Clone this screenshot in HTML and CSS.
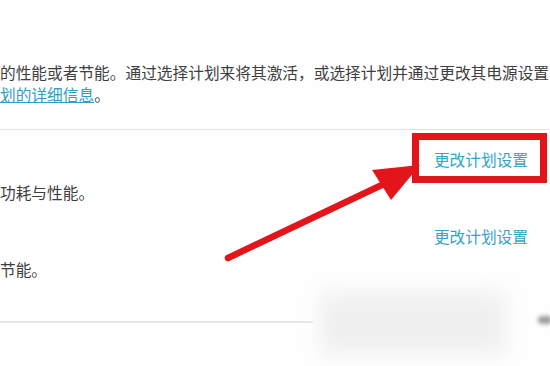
FILE: index.html
```html
<html>
<head>
<meta charset="utf-8">
<link rel="stylesheet" href="styles.css">
</head>
<body>
<div class="page">
  <div class="intro">
    <p class="line">的性能或者节能。通过选择计划来将其激活，或选择计划并通过更改其电源设置</p>
    <p class="line"><a href="#" class="detail">划的详细信息</a>。</p>
  </div>

  <div class="plans">
    <div class="plan">
      <div class="plan-head"><a href="#" class="change">更改计划设置</a></div>
      <p class="desc">功耗与性能。</p>
    </div>
    <div class="plan">
      <div class="plan-head"><a href="#" class="change">更改计划设置</a></div>
      <p class="desc">节能。</p>
    </div>
  </div>

  <!-- annotation drawn over the screenshot -->
  <div class="highlight"></div>
  <svg class="arrow" width="550" height="366" viewBox="0 0 550 366">
    <line x1="228" y1="258" x2="386" y2="183" stroke="#e3151b" stroke-width="6.5" stroke-linecap="round"/>
    <polygon points="420,165 372,170 391,200" fill="#e3151b"/>
  </svg>

  <div class="watermark"></div>
  <div class="blob"></div>
</div>
</body>
</html>
```

FILE: styles.css
```css
body {
  margin: 0;
  background: #fefefe;
  font-family: "Noto Sans CJK SC", "Noto Sans", sans-serif;
  color: #3e3e3e;
  overflow: hidden;
}

.page {
  position: relative;
  width: 550px;
  height: 366px;
  overflow: hidden;
}

p {
  margin: 0;
}

/* top explanation text */
.intro {
  padding-top: 62px;
  padding-bottom: 23px;
  border-bottom: 1px solid #e2e2e2;
}

.line {
  font-size: 15.7px;
  line-height: 22px;
  white-space: nowrap;
}

.detail {
  color: #2f9fc3;
  text-decoration: underline;
}

/* power plans */
.plans {
  padding-top: 19px;
  padding-bottom: 40px;
  border-bottom: 2px solid #e6e6e6;
  width: 313px;
}

.plan {
  width: 550px;
}

.plan + .plan {
  margin-top: 22px;
}

.plan-head {
  display: flex;
  justify-content: flex-end;
  padding-right: 22px;
  height: 22px;
  line-height: 22px;
  margin-bottom: 11px;
}

.change {
  color: #34a3c5;
  text-decoration: none;
  font-size: 15.7px;
}

.desc {
  font-size: 15.7px;
  line-height: 22px;
}

/* red frame around the link */
.highlight {
  position: absolute;
  left: 412px;
  top: 133px;
  width: 121px;
  height: 36px;
  border: 7px solid #e3151b;
}

.arrow {
  position: absolute;
  left: 0;
  top: 0;
}

/* blurred watermark at the bottom */
.watermark {
  position: absolute;
  left: 320px;
  top: 292px;
  width: 186px;
  height: 62px;
  background: #f0f0f0;
  filter: blur(10px);
}

.blob {
  position: absolute;
  left: 538px;
  top: 316px;
  width: 14px;
  height: 8px;
  border-radius: 4px;
  background: #9a9a9a;
  filter: blur(2px);
}
```
